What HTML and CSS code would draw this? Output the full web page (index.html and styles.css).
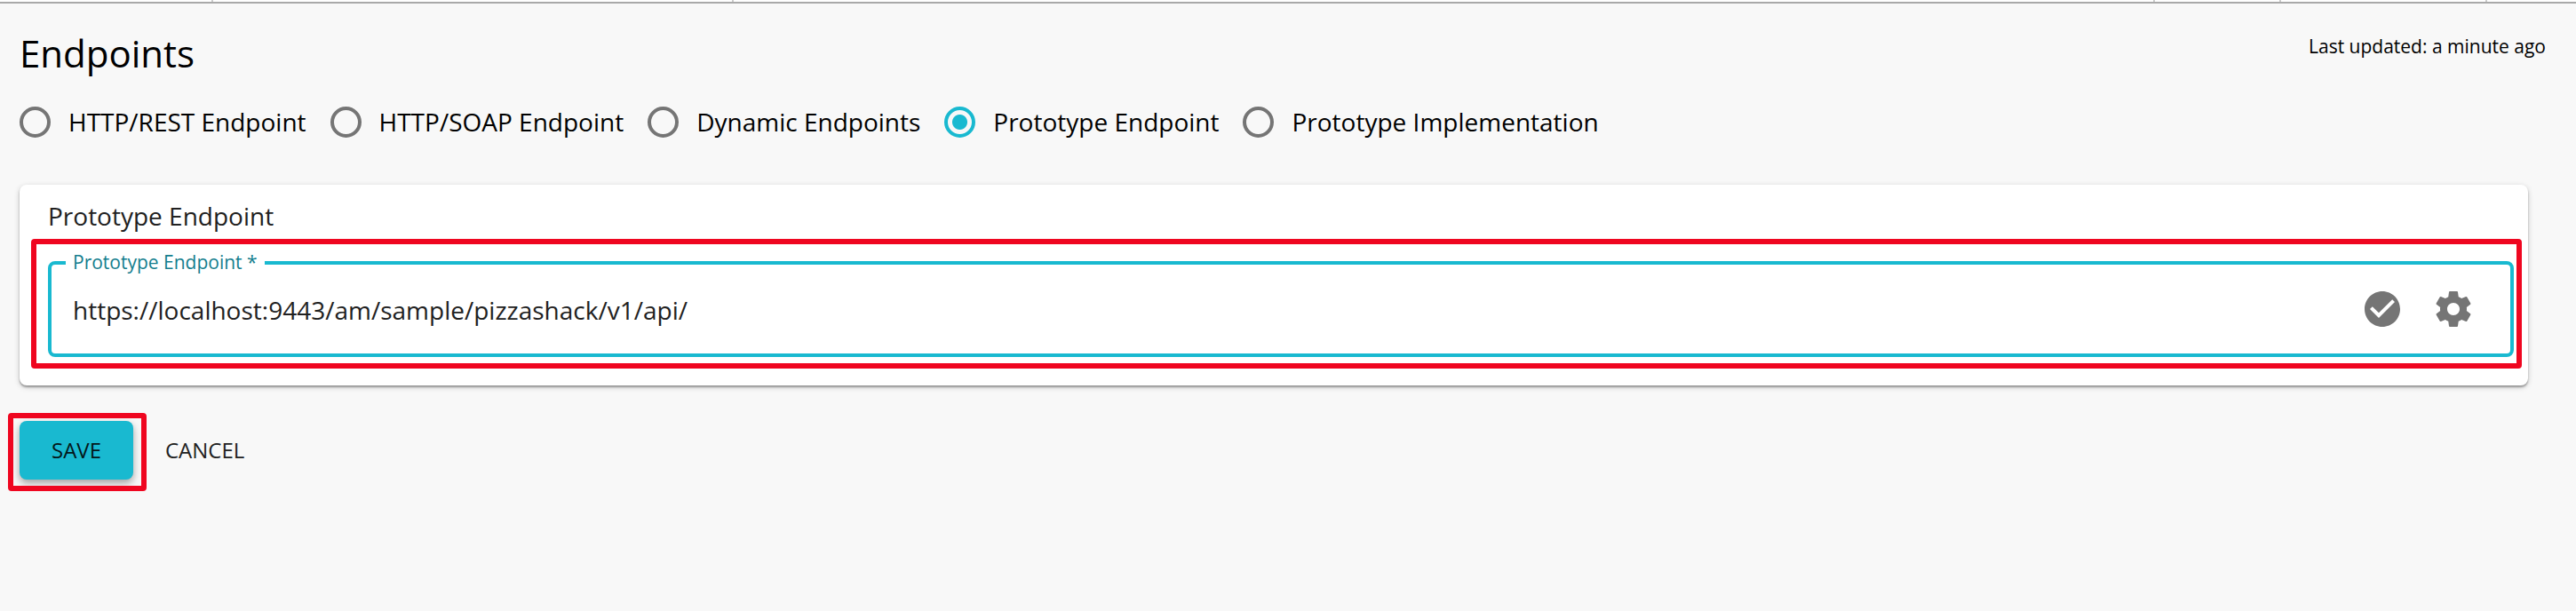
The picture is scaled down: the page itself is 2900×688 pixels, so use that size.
FILE: index.html
```html
<!DOCTYPE html>
<html lang="en">
<head>
<meta charset="utf-8">
<title>Endpoints</title>
<link rel="stylesheet" href="styles.css">
</head>
<body>
<div class="topbar"><span class="cell cell-a"></span><span class="cell cell-b"></span><span class="cell cell-fill"></span><span class="cell cell-c"></span><span class="cell cell-d"></span></div>
<main class="page">
  <header class="header">
    <h1 class="title">Endpoints</h1>
    <p class="updated">Last updated: a minute ago</p>
  </header>
  <form>
    <div class="options" role="radiogroup" aria-label="Endpoint type">
      <label class="option"><input class="radio" type="radio" name="type">HTTP/REST Endpoint</label>
      <label class="option"><input class="radio" type="radio" name="type">HTTP/SOAP Endpoint</label>
      <label class="option"><input class="radio" type="radio" name="type">Dynamic Endpoints</label>
      <label class="option"><input class="radio" type="radio" name="type" checked>Prototype Endpoint</label>
      <label class="option"><input class="radio" type="radio" name="type">Prototype Implementation</label>
    </div>
    <section class="card">
      <h2 class="card-title">Prototype Endpoint</h2>
      <div class="field">
        <label class="field-label" for="endpoint">Prototype Endpoint *</label>
        <input class="field-input" id="endpoint" type="text" value="https://localhost:9443/am/sample/pizzashack/v1/api/">
        <button class="icon-button" type="button" aria-label="Check endpoint"><svg class="icon" viewBox="0 0 24 24"><path d="M12 2C6.48 2 2 6.48 2 12s4.48 10 10 10 10-4.480 10-10S17.520 2 12 2zm-2 15l-5-5 1.410-1.410L10 14.170l7.590-7.590L19 8l-9 9z"/></svg></button>
        <button class="icon-button" type="button" aria-label="Endpoint settings"><svg class="icon" viewBox="0 0 24 24"><path d="M19.430 12.980c.04-.32.07-.64.07-.98s-.03-.66-.07-.98l2.110-1.650c.19-.15.24-.42.12-.64l-2-3.460c-.12-.22-.39-.3-.61-.22l-2.490 1c-.52-.4-1.080-.73-1.690-.98l-.38-2.650C14.460 2.180 14.250 2 14 2h-4c-.25 0-.46.18-.49.42l-.38 2.650c-.61.25-1.170.59-1.690.98l-2.490-1c-.23-.09-.49 0-.61.22l-2 3.460c-.13.22-.07.49.12.64l2.110 1.650c-.04.32-.07.65-.07.98s.03.66.07.98l-2.110 1.650c-.19.15-.24.42-.12.64l2 3.460c.12.22.39.3.61.22l2.490-1c.52.4 1.080.73 1.690.98l.38 2.650c.03.24.24.42.49.42h4c.25 0 .46-.18.49-.42l.38-2.650c.61-.25 1.170-.59 1.690-.98l2.490 1c.23.09.49 0 .61-.22l2-3.460c.12-.22.07-.49-.12-.64l-2.110-1.650zM12 15.500c-1.930 0-3.500-1.570-3.500-3.500s1.570-3.500 3.500-3.500 3.500 1.570 3.500 3.500-1.570 3.500-3.500 3.500z"/></svg></button>
        <span class="highlight highlight-field"></span>
      </div>
    </section>
    <div class="actions">
      <div class="save-wrap">
        <button class="button button-primary" type="submit">SAVE</button>
        <span class="highlight highlight-save"></span>
      </div>
      <button class="button" type="button">CANCEL</button>
    </div>
  </form>
</main>
</body>
</html>
```
FILE: styles.css
```css
* { box-sizing: border-box; }
body {
  margin: 0;
  background: #f8f8f8;
  color: #000;
  font-family: "Open Sans", "Noto Sans", sans-serif;
  font-size: 28px;
  line-height: 40px;
}
.topbar { display: flex; height: 4px; background: #fff; border-bottom: 2px solid #a9a9a9; }
.cell { border-right: 2px solid #ccc; }
.cell-a { width: 240px; }
.cell-b { width: 586px; }
.cell-fill { flex: 1; }
.cell-c { width: 142px; }
.cell-d { width: 232px; margin-right: 100px; }
.page { padding: 28px 54px 60px 22px; }
.header { display: flex; justify-content: space-between; margin-right: -20px; }
.title { margin: 0; font-size: 42px; font-weight: 400; line-height: 56px; }
.updated { margin: 0; font-size: 21px; line-height: 40px; }
.options { display: flex; flex-wrap: wrap; gap: 27px; margin-top: 29px; }
.option { display: flex; align-items: center; gap: 20px; }
.radio {
  appearance: none;
  width: 35px;
  height: 35px;
  margin: 0;
  border: 4px solid #757575;
  border-radius: 50%;
}
.radio:checked { border-color: #19b9d0; background: radial-gradient(circle, #19b9d0 8px, transparent 9px); }
.card {
  margin-top: 51px;
  padding: 16px 16px 32px 32px;
  border-radius: 8px;
  background: #fff;
  color: #212121;
  box-shadow: 0 2px 6px rgba(0, 0, 0, .2), 0 2px 2px rgba(0, 0, 0, .3);
}
.card-title { margin: 0 0 32px; font-size: 28px; font-weight: 400; line-height: 38px; }
.field {
  position: relative;
  display: flex;
  align-items: center;
  height: 108px;
  padding: 0 24px;
  border: 4px solid #19b9d0;
  border-radius: 8px;
}
.field-label {
  position: absolute;
  top: -17px;
  left: 16px;
  padding: 0 8px;
  background: #fff;
  color: #147e8e;
  font-size: 21px;
  line-height: 28px;
}
.field-input { flex: 1; min-width: 0; padding: 2px 0 0; border: 0; outline: 0; background: none; color: #212121; font: inherit; }
.icon-button { display: flex; padding: 16px; border: 0; background: none; }
.icon { width: 48px; height: 48px; fill: #757575; }
.highlight { position: absolute; border: 6px solid #ef0620; border-radius: 4px; pointer-events: none; }
.highlight-field { inset: -29px -13px -17px -23px; }
.actions { display: flex; gap: 20px; margin-top: 40px; }
.save-wrap { position: relative; }
.highlight-save { inset: -9px -15px -13px -13px; }
.button {
  padding: 13px 16px;
  border: 0;
  border-radius: 8px;
  background: none;
  color: #212121;
  font: inherit;
  font-size: 24px;
  line-height: 40px;
}
.button-primary { padding: 13px 36px; background: #19b9d0; color: #04171a; box-shadow: 0 4px 8px rgba(0, 0, 0, .35); }
```
